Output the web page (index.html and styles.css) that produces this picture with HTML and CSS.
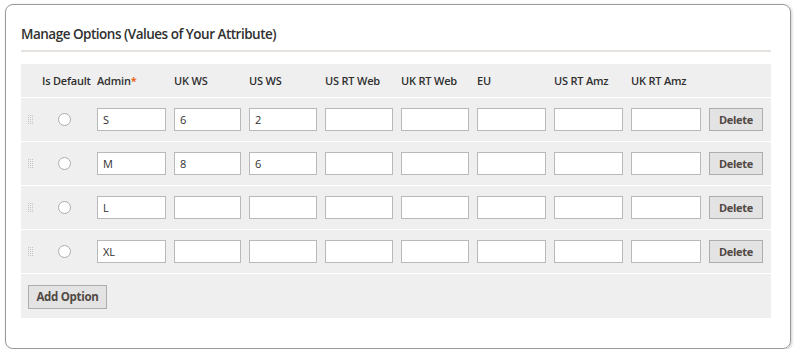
FILE: index.html
```
<!DOCTYPE html>
<html>
<head>
<meta charset="utf-8">
<link rel="stylesheet" href="styles.css">
</head>
<body>
<div class="panel">
  <h2 class="title">Manage Options (Values of Your Attribute)</h2>
  <div class="options">
    <div class="row head">
      <div></div>
      <div class="th">Is Default</div>
      <div class="th">Admin<span class="req">*</span></div>
      <div class="th">UK WS</div>
      <div class="th">US WS</div>
      <div class="th">US RT Web</div>
      <div class="th">UK RT Web</div>
      <div class="th">EU</div>
      <div class="th">US RT Amz</div>
      <div class="th">UK RT Amz</div>
      <div></div>
    </div>
    <div class="row">
      <div><svg class="handle" width="5" height="9" viewBox="0 0 5 9"><g fill="#c4c4c4"><rect x="0" y="0" width="1" height="1"/><rect x="2" y="0" width="1" height="1"/><rect x="4" y="0" width="1" height="1"/><rect x="0" y="2" width="1" height="1"/><rect x="2" y="2" width="1" height="1"/><rect x="4" y="2" width="1" height="1"/><rect x="0" y="4" width="1" height="1"/><rect x="2" y="4" width="1" height="1"/><rect x="4" y="4" width="1" height="1"/><rect x="0" y="6" width="1" height="1"/><rect x="2" y="6" width="1" height="1"/><rect x="4" y="6" width="1" height="1"/><rect x="0" y="8" width="1" height="1"/><rect x="2" y="8" width="1" height="1"/><rect x="4" y="8" width="1" height="1"/></g></svg></div>
      <div><span class="radio"></span></div>
      <div><input class="field" value="S"></div><div><input class="field" value="6"></div><div><input class="field" value="2"></div>
      <div><input class="field"></div><div><input class="field"></div><div><input class="field"></div><div><input class="field"></div><div><input class="field"></div>
      <div><button class="btn del">Delete</button></div>
    </div>
    <div class="row">
      <div><svg class="handle" width="5" height="9" viewBox="0 0 5 9"><g fill="#c4c4c4"><rect x="0" y="0" width="1" height="1"/><rect x="2" y="0" width="1" height="1"/><rect x="4" y="0" width="1" height="1"/><rect x="0" y="2" width="1" height="1"/><rect x="2" y="2" width="1" height="1"/><rect x="4" y="2" width="1" height="1"/><rect x="0" y="4" width="1" height="1"/><rect x="2" y="4" width="1" height="1"/><rect x="4" y="4" width="1" height="1"/><rect x="0" y="6" width="1" height="1"/><rect x="2" y="6" width="1" height="1"/><rect x="4" y="6" width="1" height="1"/><rect x="0" y="8" width="1" height="1"/><rect x="2" y="8" width="1" height="1"/><rect x="4" y="8" width="1" height="1"/></g></svg></div>
      <div><span class="radio"></span></div>
      <div><input class="field" value="M"></div><div><input class="field" value="8"></div><div><input class="field" value="6"></div>
      <div><input class="field"></div><div><input class="field"></div><div><input class="field"></div><div><input class="field"></div><div><input class="field"></div>
      <div><button class="btn del">Delete</button></div>
    </div>
    <div class="row">
      <div><svg class="handle" width="5" height="9" viewBox="0 0 5 9"><g fill="#c4c4c4"><rect x="0" y="0" width="1" height="1"/><rect x="2" y="0" width="1" height="1"/><rect x="4" y="0" width="1" height="1"/><rect x="0" y="2" width="1" height="1"/><rect x="2" y="2" width="1" height="1"/><rect x="4" y="2" width="1" height="1"/><rect x="0" y="4" width="1" height="1"/><rect x="2" y="4" width="1" height="1"/><rect x="4" y="4" width="1" height="1"/><rect x="0" y="6" width="1" height="1"/><rect x="2" y="6" width="1" height="1"/><rect x="4" y="6" width="1" height="1"/><rect x="0" y="8" width="1" height="1"/><rect x="2" y="8" width="1" height="1"/><rect x="4" y="8" width="1" height="1"/></g></svg></div>
      <div><span class="radio"></span></div>
      <div><input class="field" value="L"></div><div><input class="field"></div><div><input class="field"></div>
      <div><input class="field"></div><div><input class="field"></div><div><input class="field"></div><div><input class="field"></div><div><input class="field"></div>
      <div><button class="btn del">Delete</button></div>
    </div>
    <div class="row">
      <div><svg class="handle" width="5" height="9" viewBox="0 0 5 9"><g fill="#c4c4c4"><rect x="0" y="0" width="1" height="1"/><rect x="2" y="0" width="1" height="1"/><rect x="4" y="0" width="1" height="1"/><rect x="0" y="2" width="1" height="1"/><rect x="2" y="2" width="1" height="1"/><rect x="4" y="2" width="1" height="1"/><rect x="0" y="4" width="1" height="1"/><rect x="2" y="4" width="1" height="1"/><rect x="4" y="4" width="1" height="1"/><rect x="0" y="6" width="1" height="1"/><rect x="2" y="6" width="1" height="1"/><rect x="4" y="6" width="1" height="1"/><rect x="0" y="8" width="1" height="1"/><rect x="2" y="8" width="1" height="1"/><rect x="4" y="8" width="1" height="1"/></g></svg></div>
      <div><span class="radio"></span></div>
      <div><input class="field" value="XL"></div><div><input class="field"></div><div><input class="field"></div>
      <div><input class="field"></div><div><input class="field"></div><div><input class="field"></div><div><input class="field"></div><div><input class="field"></div>
      <div><button class="btn del">Delete</button></div>
    </div>
    <div class="foot">
      <button class="btn add">Add Option</button>
    </div>
  </div>
</div>
</body>
</html>
```
FILE: styles.css
```
html, body { margin: 0; padding: 0; background: #fff; }
body { font-family: "Open Sans", "Liberation Sans", sans-serif; color: #303030; }
.panel {
  box-sizing: border-box;
  margin: 4px 0 0 5px;
  width: 786px;
  height: 345px;
  border: 1px solid #9a9a9a;
  border-radius: 8px;
  box-shadow: 1px 1px 3px rgba(0,0,0,0.2);
  padding: 0 19px 0 15px;
}
.title {
  margin: 0;
  font-size: 13.5px;
  font-weight: 600;
  letter-spacing: -0.5px;
  color: #303030;
  line-height: 20px;
  padding-top: 19px;
  padding-bottom: 6px;
  border-bottom: 2px solid #e6e2dd;
}
.options {
  margin-top: 12px;
  background: #efefef;
  width: 750px;
}
.row {
  display: grid;
  grid-template-columns: 21px 55px 77px 75px 76px 76px 76px 77px 77px 78px 62px;
  align-items: center;
  height: 43px;
  border-bottom: 1px solid #fff;
}
.row.head { height: 33px; }
.th { font-size: 11px; font-weight: 600; color: #303030; white-space: nowrap; letter-spacing: -0.2px; }
.req { color: #eb5202; }
.handle { display: block; margin-left: 7px; }
.radio {
  display: block;
  width: 11px; height: 11px;
  margin-left: 16px;
  border: 1px solid #adadad;
  border-radius: 50%;
  background: #fff;
}
.field {
  display: block;
  box-sizing: border-box;
  width: calc(100% - 8px);
  height: 23px;
  border: 1px solid #b9b9b9;
  background: #fff;
  font-family: "Open Sans", "Liberation Sans", sans-serif;
  font-size: 11px;
  color: #303030;
  padding: 0 5px;
  margin: 0;
  outline: none;
}
.btn {
  box-sizing: border-box;
  background: #e3e3e3;
  border: 1px solid #adadad;
  font-family: "Open Sans", "Liberation Sans", sans-serif;
  font-weight: 700;
  letter-spacing: -0.3px;
  color: #514943;
  font-size: 11px;
  padding: 0;
  margin: 0;
}
.del { width: 54px; height: 23px; display: block; }
.foot { padding: 10px 7px; height: 44px; box-sizing: border-box; }
.add { width: 79px; height: 24px; font-size: 11.5px; }
```
